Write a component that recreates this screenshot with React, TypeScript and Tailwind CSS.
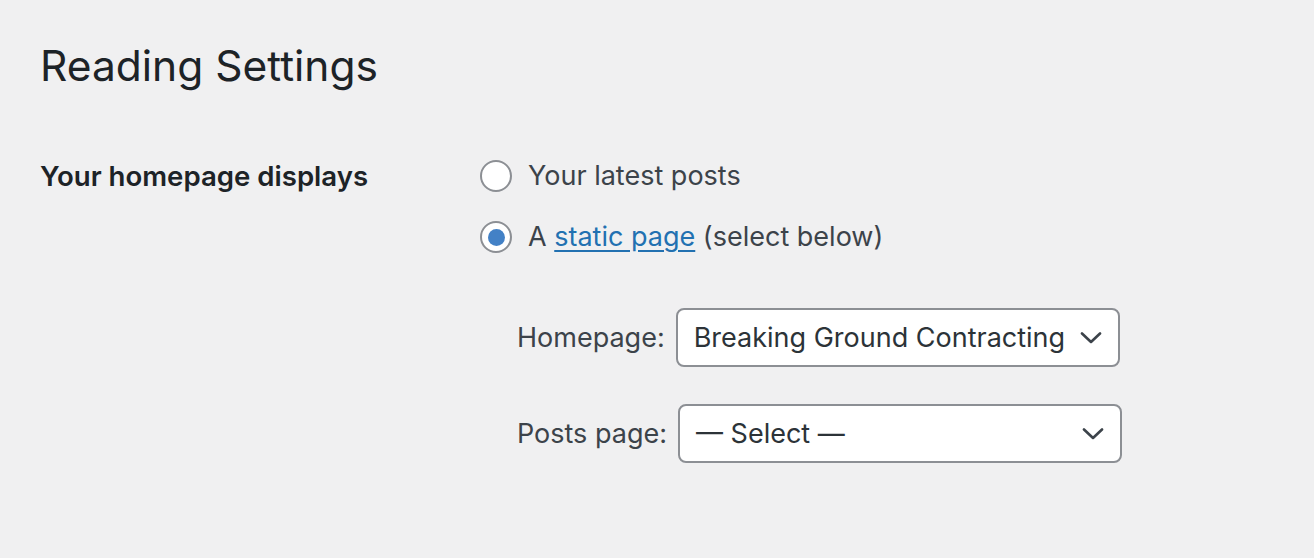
import React from "react";

function Chevron() {
  return (
    <svg width="22" height="12" viewBox="0 0 22 12" fill="none" className="shrink-0">
      <path d="M2 1.5 L11 10 L20 1.5" stroke="#3c434a" strokeWidth="2.6" strokeLinecap="round" strokeLinejoin="round" />
    </svg>
  );
}

function Radio({ checked }: { checked?: boolean }) {
  return (
    <span className="flex h-[32px] w-[32px] shrink-0 items-center justify-center rounded-full border-2 border-[#8c8f94] bg-white">
      {checked && <span className="h-[17px] w-[17px] rounded-full bg-[#4381c6]" />}
    </span>
  );
}

function Select({ value, width }: { value: string; width: string }) {
  return (
    <div
      className={`flex h-[59px] items-center justify-between rounded-[8px] border-2 border-[#8c8f94] bg-white pl-[16px] pr-[16px] ${width}`}
    >
      <span className="text-[27px] leading-[36px] text-[#2c3338]">{value}</span>
      <Chevron />
    </div>
  );
}

export default function App() {
  return (
    <main
      className="min-h-screen bg-[#f0f0f1] pl-[40px] pt-[38px]"
      style={{ fontFamily: "Inter, 'Noto Sans', sans-serif" }}
    >
      <h1 className="text-[42.5px] leading-[56px] font-normal text-[#1d2327]">Reading Settings</h1>

      <div className="mt-[64px] flex">
        <div className="w-[440px] text-[27.6px] leading-[36px] font-semibold text-[#1d2327]">
          Your homepage displays
        </div>

        <div className="flex flex-col text-[27px] leading-[36px] text-[#3c434a]">
          <label className="flex items-center gap-[16px]">
            <Radio />
            <span>Your latest posts</span>
          </label>
          <label className="mt-[25px] flex items-center gap-[16px]">
            <Radio checked />
            <span>
              A{" "}
              <a href="#" className="text-[#2271b1] underline underline-offset-[4px]">
                static page
              </a>{" "}
              (select below)
            </span>
          </label>

          <div className="mt-[53px] flex flex-col gap-[37px] pl-[37px]">
            <div className="flex items-center gap-[11px]">
              <span>Homepage:</span>
              <Select value="Breaking Ground Contracting" width="w-[444px]" />
            </div>
            <div className="flex items-center gap-[11px]">
              <span>Posts page:</span>
              <Select value="— Select —" width="w-[444px]" />
            </div>
          </div>
        </div>
      </div>
    </main>
  );
}
